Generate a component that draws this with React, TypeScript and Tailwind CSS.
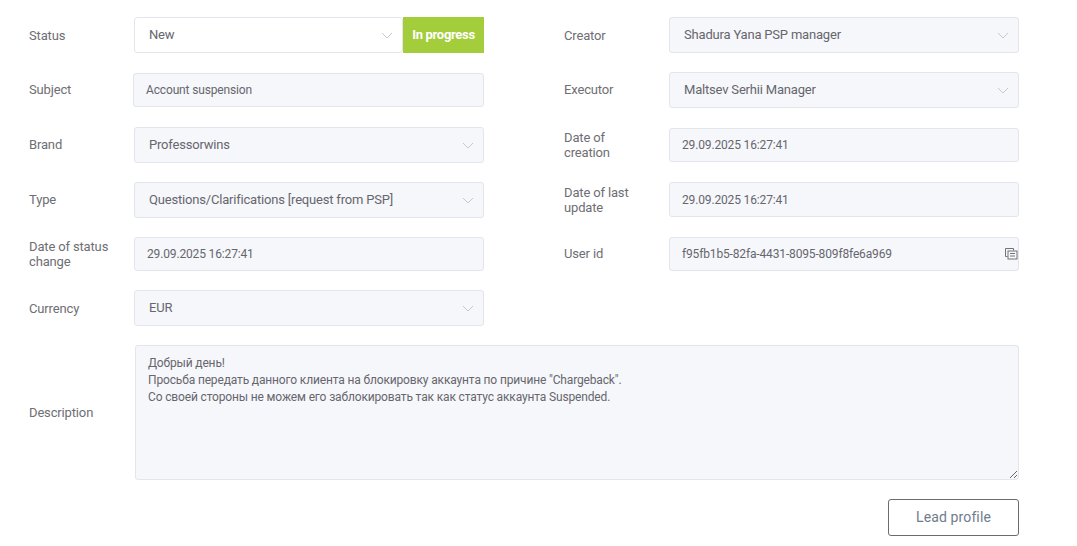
type RowProps = { label: string; className?: string; labelClass?: string; children: React.ReactNode };

function Row({ label, className = '', labelClass = '', children }: RowProps) {
  return (
    <div className={`flex items-center ${className}`}>
      <div className={`w-[105px] shrink-0 pr-4 text-[13px] leading-[15px] tracking-[-0.15px] text-[#6e6e74] ${labelClass}`}>
        {label}
      </div>
      {children}
    </div>
  );
}

function Chevron() {
  return (
    <svg width="12" height="7" viewBox="0 0 12 7" fill="none" stroke="#c6c9d2" strokeWidth="1" className="shrink-0">
      <path d="M1 1l5 5 5-5" />
    </svg>
  );
}

function Select({ value, white, className = '' }: { value: string; white?: boolean; className?: string }) {
  return (
    <div
      className={`flex h-9 flex-1 items-center justify-between rounded-[3px] border border-[#e3e5ec] pl-[14px] pr-[9px] text-[13px] tracking-[-0.19px] text-[#66666e] ${white ? 'bg-white' : 'bg-[#f6f7fa]'} ${className}`}
    >
      <span>{value}</span>
      <Chevron />
    </div>
  );
}

function Field({ value, className = '', children }: { value: string; className?: string; children?: React.ReactNode }) {
  return (
    <div
      className={`flex h-[34px] flex-1 items-center justify-between rounded-[3px] border border-[#e3e5ec] bg-[#f6f7fa] pl-3 text-[12px] tracking-[-0.15px] text-[#66666e] ${className}`}
    >
      <span>{value}</span>
      {children}
    </div>
  );
}

function CopyIcon() {
  return (
    <svg width="13" height="13" viewBox="0 0 13 13" fill="none" stroke="#6f7278" strokeWidth="1" className="-translate-y-px">
      <path d="M2.5 9.5h-2v-8h8v2" />
      <rect x="3" y="4" width="9" height="8" />
      <path d="M5 6.5h5M5 9h5" />
    </svg>
  );
}

export default function App() {
  return (
    <div
      className="h-[546px] w-[1077px] overflow-hidden bg-white pl-[29px] pt-[17px]"
      style={{ fontFamily: 'Roboto, sans-serif' }}
    >
      <div className="flex w-[990px] gap-[80px]">
        <div className="w-[455px]">
          <Row label="Status">
            <Select value="New" white />
            <div className="flex h-9 w-[81px] shrink-0 items-center justify-center bg-[#a3cd3b] text-[13px] font-bold tracking-[-0.3px] text-white">
              In progress
            </div>
          </Row>
          <Row label="Subject" className="mt-5" labelClass="mb-[2px]">
            <Field value="Account suspension" className="-ml-px" />
          </Row>
          <Row label="Brand" className="mt-5" labelClass="mb-[2px]">
            <Select value="Professorwins" />
          </Row>
          <Row label="Type" className="mt-[19px]" labelClass="mb-[2px]">
            <Select value="Questions/Clarifications [request from PSP]" />
          </Row>
          <Row label="Date of status change" className="mt-[19px]">
            <Field value="29.09.2025 16:27:41" />
          </Row>
          <Row label="Currency" className="mt-[19px]">
            <Select value="EUR" />
          </Row>
        </div>
        <div className="w-[455px]">
          <Row label="Creator">
            <Select value="Shadura Yana PSP manager" />
          </Row>
          <Row label="Executor" className="mt-[19px]" labelClass="mb-[2px]">
            <Select value="Maltsev Serhii Manager" />
          </Row>
          <Row label="Date of creation" className="mt-5">
            <Field value="29.09.2025 16:27:41" />
          </Row>
          <Row label="Date of last update" className="mt-5">
            <Field value="29.09.2025 16:27:41" className="h-[35px]" />
          </Row>
          <Row label="User id" className="mt-5" labelClass="mb-[2px]">
            <Field value="f95fb1b5-82fa-4431-8095-809f8fe6a969">
              <CopyIcon />
            </Field>
          </Row>
        </div>
      </div>
      <div className="mt-[19px] flex w-[990px] items-center">
        <div className="w-[106px] shrink-0 text-[13px] leading-[15px] tracking-[-0.15px] text-[#6e6e74]">Description</div>
        <textarea
          readOnly
          className="h-[135px] flex-1 rounded-[3px] border border-[#e3e5ec] bg-[#f6f7fa] px-3 pb-2 pt-[9px] text-[12px] leading-[17px] tracking-[-0.15px] text-[#66666e] outline-none"
          defaultValue={
            'Добрый день!\nПросьба передать данного клиента на блокировку аккаунта по причине "Chargeback".\nСо своей стороны не можем его заблокировать так как статус аккаунта Suspended.'
          }
        />
      </div>
      <div className="mt-[19px] flex w-[990px] justify-end">
        <button className="h-[37px] w-[131px] rounded-[3px] border border-[#6b6b6b] bg-white text-[14px] tracking-[0.12px] text-[#6f7c8c]">
          Lead profile
        </button>
      </div>
    </div>
  );
}
